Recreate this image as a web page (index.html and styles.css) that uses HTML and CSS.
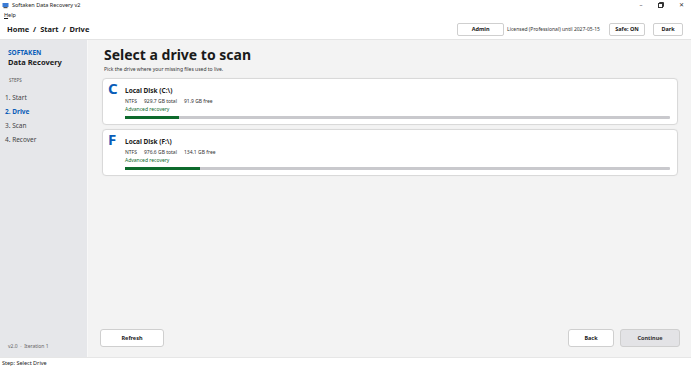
FILE: index.html
```html
<!DOCTYPE html>
<html lang="en">
<head>
  <meta charset="UTF-8">
  <title>Softaken Data Recovery v2</title>
  <link rel="stylesheet" href="styles.css">
</head>
<body>

  <!-- TITLE BAR -->
  <div class="titlebar">
    <div class="title-left">
      <svg class="app-icon" width="7" height="7" viewBox="0 0 7 7">
        <rect x="0.5" y="1" width="6" height="4" fill="#3a7bd5"/>
        <rect x="1.5" y="5" width="4" height="1.2" fill="#555"/>
      </svg>
      <span>Softaken Data Recovery v2</span>
    </div>
    <div class="win-controls">
      <span class="wc">&#8211;</span>
      <span class="wc">
        <svg width="6" height="6" viewBox="0 0 6 6"><rect x="0.5" y="1.5" width="4" height="4" fill="none" stroke="#333" stroke-width="1"/><path d="M1.5 1.5V0.5H5.5V4.5H4.5" fill="none" stroke="#333" stroke-width="1"/></svg>
      </span>
      <span class="wc">&#10005;</span>
    </div>
  </div>

  <!-- MENU -->
  <div class="menubar"><span><u>H</u>elp</span></div>

  <!-- HEADER -->
  <div class="header">
    <div class="crumbs">Home &nbsp;/&nbsp; Start &nbsp;/&nbsp; Drive</div>
    <div class="header-right">
      <button class="btn btn-admin">Admin</button>
      <span class="license">Licensed (Professional) until 2027-05-15</span>
      <button class="btn btn-safe">Safe: ON</button>
      <button class="btn btn-dark">Dark</button>
    </div>
  </div>

  <div class="workspace">

    <!-- SIDEBAR -->
    <div class="sidebar">
      <div class="brand">SOFTAKEN</div>
      <div class="product">Data Recovery</div>
      <div class="steps-label">STEPS</div>
      <div class="step">1. Start</div>
      <div class="step active">2. Drive</div>
      <div class="step">3. Scan</div>
      <div class="step">4. Recover</div>
      <div class="version">v2.0 &nbsp;·&nbsp; Iteration 1</div>
    </div>

    <!-- MAIN -->
    <div class="main">
      <h1 class="page-title">Select a drive to scan</h1>
      <p class="page-sub">Pick the drive where your missing files used to live.</p>

      <div class="drives">
        <div class="drive">
          <div class="drive-letter">C</div>
          <div class="drive-info">
            <div class="drive-name">Local Disk (C:\)</div>
            <div class="drive-meta"><span>NTFS</span><span>929.7 GB total</span><span>91.9 GB free</span></div>
            <div class="drive-mode">Advanced recovery</div>
            <div class="bar"><div class="bar-fill" style="width:9.9%"></div></div>
          </div>
        </div>

        <div class="drive">
          <div class="drive-letter">F</div>
          <div class="drive-info">
            <div class="drive-name">Local Disk (F:\)</div>
            <div class="drive-meta"><span>NTFS</span><span>976.6 GB total</span><span>134.1 GB free</span></div>
            <div class="drive-mode">Advanced recovery</div>
            <div class="bar"><div class="bar-fill" style="width:13.7%"></div></div>
          </div>
        </div>
      </div>

      <div class="footer">
        <button class="btn btn-foot">Refresh</button>
        <div class="footer-right">
          <button class="btn btn-foot btn-back">Back</button>
          <button class="btn btn-foot btn-continue">Continue</button>
        </div>
      </div>
    </div>
  </div>

  <!-- STATUS -->
  <div class="statusbar">Step: Select Drive</div>

</body>
</html>
```

FILE: styles.css
```css
:root {
  --sidebar-bg: #e6e7ea;
  --main-bg: #f3f3f3;
  --border: #d9d9d9;
  --blue: #0a5db8;
  --green: #0d6a2c;
  --text: #1a1a1a;
  --muted: #555;
}
* { margin:0; padding:0; box-sizing:border-box; }
html, body { height:100%; }
body {
  display:flex; flex-direction:column;
  font-family:"Noto Sans","Open Sans",sans-serif;
  color:var(--text);
  background:#fff;
  overflow:hidden;
}

/* TITLE BAR */
.titlebar {
  height:10px; display:flex; justify-content:space-between; align-items:center;
  font-size:5.5px; background:#fff;
}
.title-left { display:flex; align-items:center; gap:3px; padding-left:2px; }
.win-controls { display:flex; height:100%; }
.wc {
  width:20px; display:flex; align-items:center; justify-content:center;
  font-size:6px; color:#333;
}

/* MENU */
.menubar { height:9px; font-size:5.5px; padding-left:4px; display:flex; align-items:center; }

/* HEADER */
.header {
  height:21px; display:flex; justify-content:space-between; align-items:center;
  padding:0 8px 0 7px; border-bottom:1px solid #e4e4e4; background:#fff;
}
.crumbs { font-size:7.5px; font-weight:700; }
.header-right { display:flex; align-items:center; }
.btn {
  font-family:inherit; font-size:5.5px; font-weight:700; color:var(--text);
  background:#fff; border:1px solid #cfcfcf; border-radius:2px; cursor:pointer;
}
.header .btn { height:13px; }
.btn-admin { width:47px; }
.license { font-size:5px; color:#333; margin:0 9px 0 3px; }
.btn-safe { width:36px; margin-right:8px; }
.btn-dark { width:30px; }

/* WORKSPACE */
.workspace { flex:1; display:flex; min-height:0; }

/* SIDEBAR */
.sidebar {
  width:87px; background:var(--sidebar-bg); display:flex; flex-direction:column;
  padding:8px 0 8px 8px;
}
.brand { font-size:6.5px; font-weight:700; color:var(--blue); line-height:9px; }
.product { font-size:7.5px; font-weight:700; line-height:11px; }
.steps-label { font-size:4.5px; color:var(--muted); margin-top:9px; margin-left:1px; line-height:7px; }
.step { font-size:6.5px; color:#444; line-height:14px; margin-left:-3px; }
.steps-label + .step { margin-top:7px; }
.step.active { color:var(--blue); font-weight:700; }
.version { margin-top:auto; font-size:5px; color:#666; }

/* MAIN */
.main {
  flex:1; background:var(--main-bg); display:flex; flex-direction:column;
  padding:6px 13px 10px 14px; border-left:1px solid #f8f8f8;
}
.page-title { font-size:14px; font-weight:700; line-height:18px; padding-left:2px; }
.page-sub { font-size:5px; color:#333; line-height:8px; padding-left:2px; margin-top:1px; }

.drives { display:flex; flex-direction:column; gap:4px; margin-top:5px; }
.drive {
  height:47px; background:#fff; border:1px solid var(--border); border-radius:4px;
  display:flex; padding:2px 7px 0 5px;
  box-shadow:0 0 2px rgba(0,0,0,0.04);
}
.drive-letter {
  width:17px; font-size:15px; font-weight:700; color:var(--blue); line-height:15px;
}
.drive-info { flex:1; display:flex; flex-direction:column; padding-top:5px; }
.drive-name { font-size:6.5px; font-weight:700; line-height:9px; }
.drive-meta { font-size:5px; color:#333; line-height:8px; margin-top:2px; display:flex; gap:7px; }
.drive-mode { font-size:5px; color:var(--green); line-height:8px; }
.bar { height:3px; background:#c9c9cd; margin-top:3px; border-radius:1px; }
.bar-fill { height:100%; background:var(--green); }

/* FOOTER */
.footer {
  margin-top:auto; display:flex; justify-content:space-between; align-items:center;
  margin-left:-2px; margin-right:-2px;
}
.footer-right { display:flex; gap:6px; }
.btn-foot { height:18px; width:64px; border-radius:3px; }
.btn-back { width:46px; }
.btn-continue { width:60px; background:#e3e3e6; color:#333; }

/* STATUS */
.statusbar {
  height:11px; font-size:5.5px; padding-left:2px; display:flex; align-items:center;
  border-top:1px solid #e6e6e6; background:#fff;
}
```
